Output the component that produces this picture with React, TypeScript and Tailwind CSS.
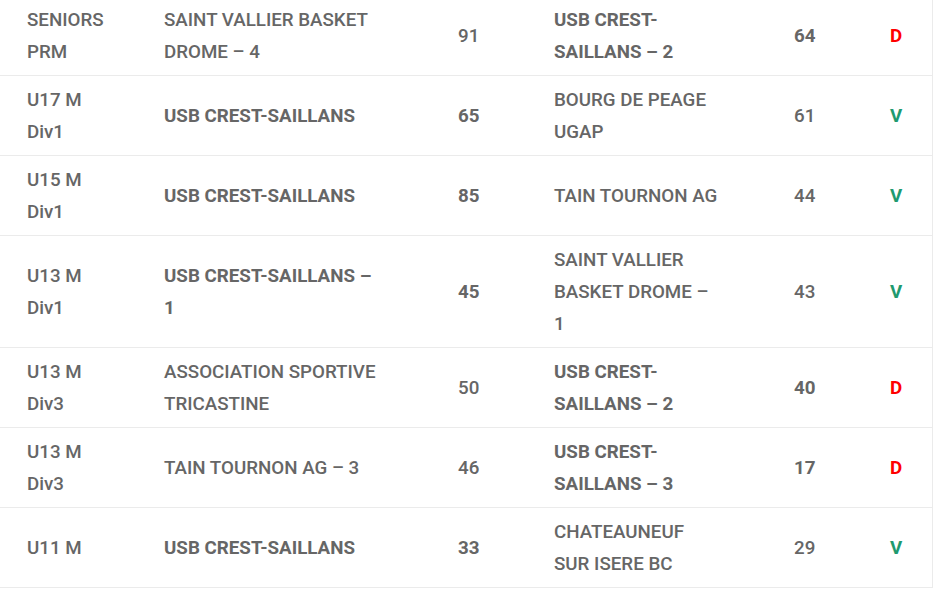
import React from "react";

type Match = {
  cat: string;
  home: string;
  homeScore: number;
  away: string;
  awayScore: number;
  result: "V" | "D";
  homeIsUs: boolean;
};

const matches: Match[] = [
  { cat: "SENIORS PRM", home: "SAINT VALLIER BASKET DROME – 4", homeScore: 91, away: "USB CREST-SAILLANS – 2", awayScore: 64, result: "D", homeIsUs: false },
  { cat: "U17 M Div1", home: "USB CREST-SAILLANS", homeScore: 65, away: "BOURG DE PEAGE UGAP", awayScore: 61, result: "V", homeIsUs: true },
  { cat: "U15 M Div1", home: "USB CREST-SAILLANS", homeScore: 85, away: "TAIN TOURNON AG", awayScore: 44, result: "V", homeIsUs: true },
  { cat: "U13 M Div1", home: "USB CREST-SAILLANS – 1", homeScore: 45, away: "SAINT VALLIER BASKET DROME – 1", awayScore: 43, result: "V", homeIsUs: true },
  { cat: "U13 M Div3", home: "ASSOCIATION SPORTIVE TRICASTINE", homeScore: 50, away: "USB CREST-SAILLANS – 2", awayScore: 40, result: "D", homeIsUs: false },
  { cat: "U13 M Div3", home: "TAIN TOURNON AG – 3", homeScore: 46, away: "USB CREST-SAILLANS – 3", awayScore: 17, result: "D", homeIsUs: false },
  { cat: "U11 M", home: "USB CREST-SAILLANS", homeScore: 33, away: "CHATEAUNEUF SUR ISERE BC", awayScore: 29, result: "V", homeIsUs: true },
];

export default function App() {
  return (
    <div
      className="bg-white min-h-[600px] text-[18.75px] leading-[32px] text-[#666666]"
      style={{ fontFamily: "Roboto, 'Liberation Sans', sans-serif" }}
    >
      <div className="-mt-[4px] w-[933px] border-r border-[#ebebeb]">
        {matches.map((m, i) => (
          <div
            key={i}
            className="grid grid-cols-[137px_294px_96px_240px_96px_68px] items-center border-b border-[#ebebeb] pt-2 pb-[7px] font-medium"
          >
            <div className="pl-[27px] pr-[30px]">{m.cat}</div>
            <div className={`pl-[27px] pr-[53px] ${m.homeIsUs ? "font-bold" : ""}`}>
              {m.home}
            </div>
            <div className={`pl-[27px] ${m.homeIsUs ? "font-bold" : ""}`}>
              {m.homeScore}
            </div>
            <div className={`pl-[27px] pr-[48px] ${m.homeIsUs ? "" : "font-bold"}`}>
              {m.away}
            </div>
            <div className={`pl-[27px] ${m.homeIsUs ? "" : "font-bold"}`}>
              {m.awayScore}
            </div>
            <div
              className={`pl-[27px] font-bold ${
                m.result === "V" ? "text-[#1f9a6f]" : "text-[#ff0000]"
              }`}
            >
              {m.result}
            </div>
          </div>
        ))}
      </div>
    </div>
  );
}
